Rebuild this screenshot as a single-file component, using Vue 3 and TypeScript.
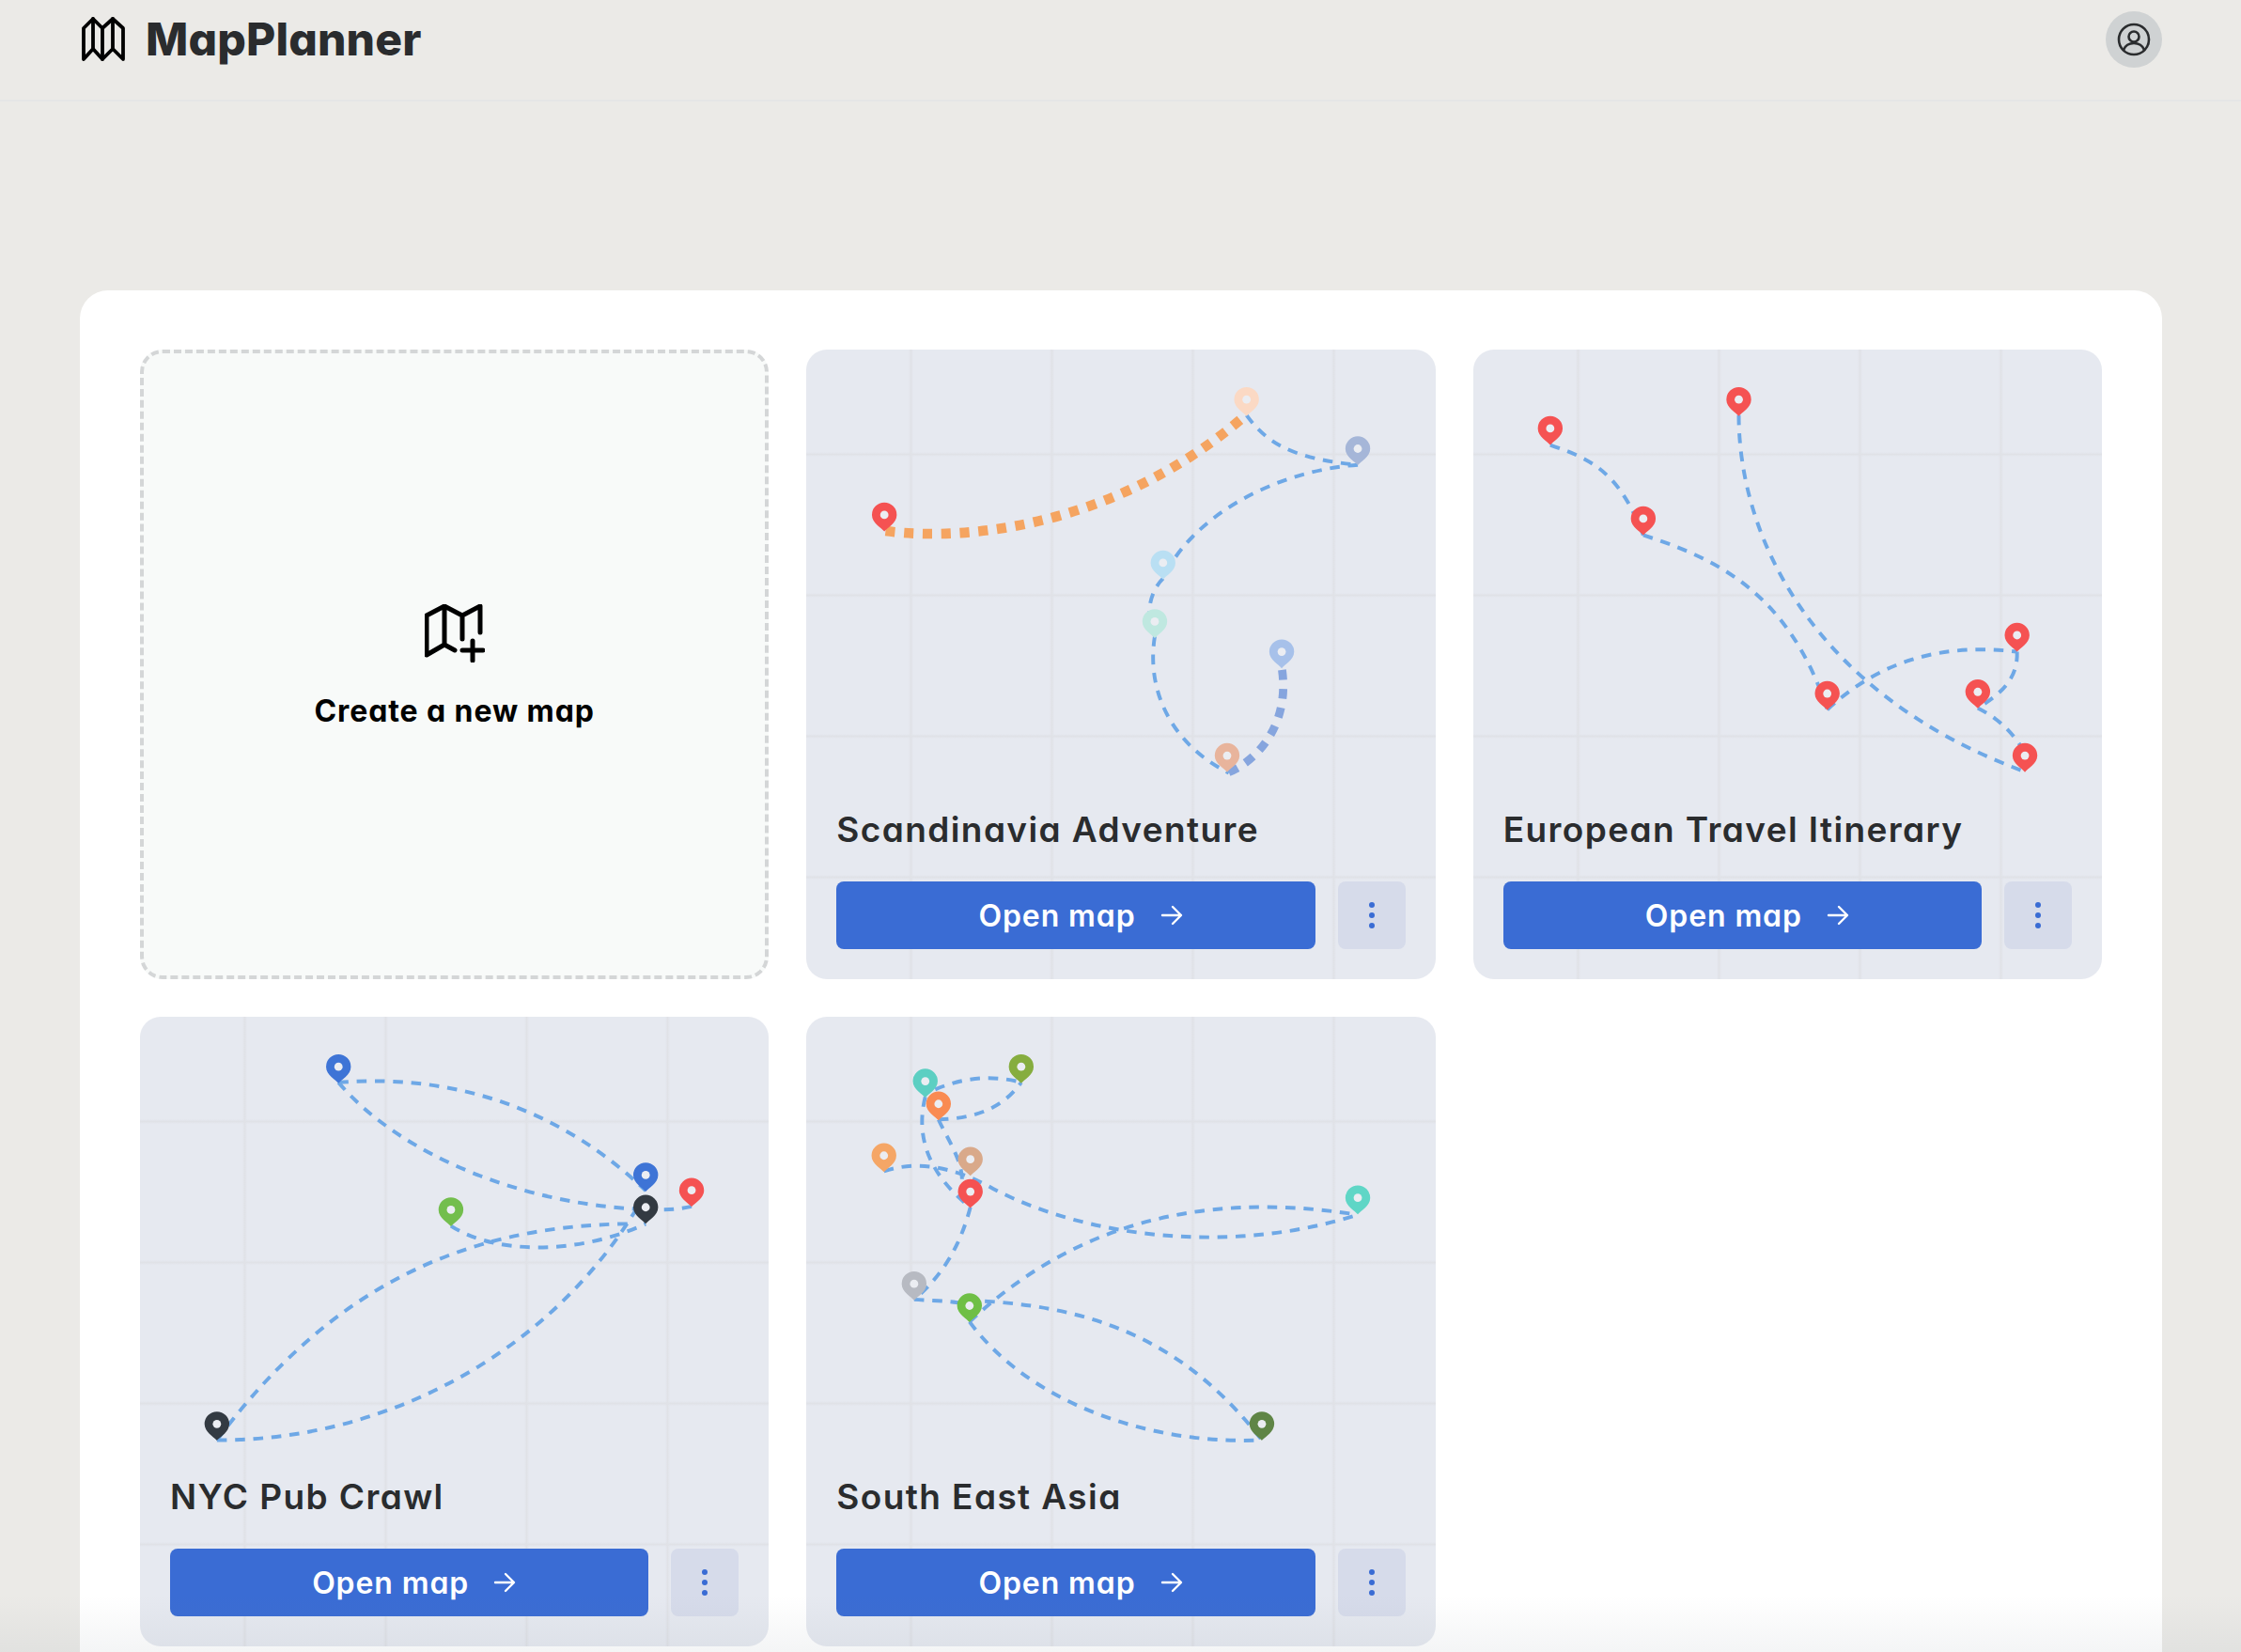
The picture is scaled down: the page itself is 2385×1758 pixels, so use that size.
<script setup lang="ts">
interface Pin { x: number; y: number; c: string }
interface Route { d: string; kind?: 'orange' | 'thick' }
interface MapCard { title: string; vb: string; routes: Route[]; pins: Pin[] }

const pinPath = 'M0 40C-6 32-30 20-30 0A30 30 0 0 1 30 0C30 20 6 32 0 40Z'

const maps: MapCard[] = [
  {
    title: 'Scandinavia Adventure',
    vb: '18 27 1521 1521',
    routes: [
      { d: 'M210 465C450 495 800 430 1083 183', kind: 'orange' },
      { d: 'M1083 185C1130 250 1190 290 1352 305' },
      { d: 'M1352 305C1150 320 950 430 881 580' },
      { d: 'M881 580C850 610 835 670 861 718' },
      { d: 'M861 720C840 850 900 980 1040 1050' },
      { d: 'M1040 1048C1110 1020 1190 930 1168 795', kind: 'thick' }
    ],
    pins: [
      { x: 207, y: 426, c: '#f55252' },
      { x: 1083, y: 147, c: '#fbd9c4' },
      { x: 1352, y: 266, c: '#a5b6d8' },
      { x: 881, y: 542, c: '#b9dff3' },
      { x: 861, y: 684, c: '#bfe8e0' },
      { x: 1168, y: 757, c: '#a7c1ea' },
      { x: 1036, y: 1008, c: '#e8b49c' }
    ]
  },
  {
    title: 'European Travel Itinerary',
    vb: '18 27 1521 1521',
    routes: [
      { d: 'M204 257C300 290 370 320 429 475' },
      { d: 'M429 475C600 530 780 610 874 897' },
      { d: 'M660 185C660 480 840 860 1352 1047' },
      { d: 'M874 897C1000 780 1150 735 1333 757' },
      { d: 'M1333 757C1335 810 1310 850 1238 893' },
      { d: 'M1238 893C1290 920 1320 950 1352 1000' }
    ],
    pins: [
      { x: 204, y: 217, c: '#f55252' },
      { x: 429, y: 435, c: '#f55252' },
      { x: 660, y: 147, c: '#f55252' },
      { x: 874, y: 858, c: '#f55252' },
      { x: 1238, y: 854, c: '#f55252' },
      { x: 1333, y: 717, c: '#f55252' },
      { x: 1352, y: 1008, c: '#f55252' }
    ]
  },
  {
    title: 'NYC Pub Crawl',
    vb: '20 25 1521 1521',
    routes: [
      { d: 'M500 183C800 160 1050 260 1243 445' },
      { d: 'M500 183C650 360 950 480 1243 490' },
      { d: 'M1243 490C1290 492 1320 490 1354 483' },
      { d: 'M772 530C880 600 1080 600 1243 525' },
      { d: 'M206 1048C480 680 800 530 1200 525' },
      { d: 'M206 1048C600 1050 1000 850 1220 490' }
    ],
    pins: [
      { x: 500, y: 145, c: '#3e74d6' },
      { x: 1243, y: 407, c: '#3e74d6' },
      { x: 1354, y: 444, c: '#f55252' },
      { x: 772, y: 491, c: '#73be4d' },
      { x: 1243, y: 485, c: '#333a42' },
      { x: 206, y: 1009, c: '#333a42' }
    ]
  },
  {
    title: 'South East Asia',
    vb: '18 25 1521 1521',
    routes: [
      { d: 'M330 200C400 170 470 165 538 183' },
      { d: 'M338 273C420 270 490 250 538 183' },
      { d: 'M338 273C360 320 395 370 395 420' },
      { d: 'M306 218C280 320 320 410 415 485' },
      { d: 'M206 398C300 365 400 400 470 440C700 560 1050 600 1352 503' },
      { d: 'M415 485C395 560 360 640 279 708' },
      { d: 'M279 708C340 712 400 710 450 735' },
      { d: 'M413 762C650 540 950 440 1352 503' },
      { d: 'M450 712C750 730 950 830 1120 1048' },
      { d: 'M413 762C560 960 850 1060 1120 1048' }
    ],
    pins: [
      { x: 538, y: 145, c: '#86ad3f' },
      { x: 306, y: 180, c: '#5ccfc2' },
      { x: 338, y: 235, c: '#f98b52' },
      { x: 206, y: 360, c: '#f5a666' },
      { x: 415, y: 369, c: '#d9a98a' },
      { x: 415, y: 447, c: '#f55252' },
      { x: 1352, y: 462, c: '#5fd6c6' },
      { x: 279, y: 670, c: '#b7bac2' },
      { x: 413, y: 723, c: '#6fbf46' },
      { x: 1120, y: 1009, c: '#5f8546' }
    ]
  }
]
</script>

<template>
  <div class="page">
    <header class="topbar">
      <div class="brand">
        <svg class="brand-icon" viewBox="0 0 46 50" fill="none" stroke="#000" stroke-width="3.8" stroke-linejoin="round" stroke-linecap="round">
          <path d="M2 46V13L12 3L22 13L33 3L44 13V46L33 35L22 46L12 35Z" />
          <path d="M12 3V35M22 13V46M33 3V35" />
        </svg>
        <span class="brand-name">MapPlanner</span>
      </div>
      <div class="avatar">
        <svg viewBox="0 0 36 36" fill="none" stroke="#2a2c2e" stroke-width="2.6" stroke-linecap="round">
          <circle cx="18" cy="18" r="16" />
          <circle cx="18" cy="15" r="5.5" />
          <path d="M7 29C9 24 13 22 18 22S27 24 29 29" />
        </svg>
      </div>
    </header>

    <main class="panel">
      <div class="grid">
        <button class="create" type="button">
          <svg class="create-icon" viewBox="0 0 64 62" fill="none" stroke="#000" stroke-width="5" stroke-linecap="round" stroke-linejoin="round">
            <path d="M2 54V12L21 2L40 12L59 2V30M21 2V42M40 12V37M2 54L21 43L32 49" />
            <path d="M51 39V60M40 49H62" />
          </svg>
          <span class="create-label">Create a new map</span>
        </button>

        <article v-for="m in maps" :key="m.title" class="card">
          <svg class="map" :viewBox="m.vb" fill="none">
            <path
              v-for="(r, i) in m.routes"
              :key="i"
              :d="r.d"
              class="route"
              :class="r.kind"
            />
            <g v-for="(p, i) in m.pins" :key="'p' + i" :transform="`translate(${p.x} ${p.y})`">
              <path :d="pinPath" :fill="p.c" />
              <circle r="10" fill="#ebedf2" />
            </g>
          </svg>
          <div class="card-body">
            <h2 class="card-title">{{ m.title }}</h2>
            <div class="actions">
              <button class="open" type="button">
                <span>Open map</span>
                <svg viewBox="0 0 24 22" fill="none" stroke="#fff" stroke-width="2.4" stroke-linecap="round" stroke-linejoin="round">
                  <path d="M2 11H22M13 2L22 11L13 20" />
                </svg>
              </button>
              <button class="more" type="button" aria-label="More">
                <i></i><i></i><i></i>
              </button>
            </div>
          </div>
        </article>
      </div>
    </main>

    <div class="fade"></div>
  </div>
</template>

<style scoped>
.page {
  position: relative;
  height: 1758px;
  overflow: hidden;
  background: #ebeae7;
  font-family: Inter, "Liberation Sans", sans-serif;
  font-feature-settings: "cv11" 1;
}
.topbar {
  height: 108px;
  box-sizing: border-box;
  border-bottom: 2px solid #e5e6e6;
  display: flex;
  align-items: flex-start;
  justify-content: space-between;
  padding: 12px 84px 0 87px;
}
.brand {
  display: flex;
  align-items: center;
  gap: 22px;
  height: 60px;
}
.brand-icon {
  width: 46px;
  height: 50px;
}
.brand-name {
  font-size: 48px;
  font-weight: 800;
  color: #2a2c2e;
  line-height: 60px;
  letter-spacing: 0.15px;
}
.avatar {
  width: 60px;
  height: 60px;
  border-radius: 50%;
  background: #cfd2d3;
  display: flex;
  align-items: center;
  justify-content: center;
}
.avatar svg {
  width: 36px;
  height: 36px;
}
.panel {
  margin: 201px 84px 0 85px;
  padding: 63px 64px 64px;
  background: #fff;
  border-radius: 30px;
}
.grid {
  display: grid;
  grid-template-columns: repeat(3, 1fr);
  gap: 40px;
}
.create {
  height: 670px;
  box-sizing: border-box;
  border: 4px dashed #d4d6d7;
  border-radius: 24px;
  background: #f8faf9;
  display: flex;
  flex-direction: column;
  align-items: center;
  justify-content: center;
  gap: 32px;
  padding: 6px 0 0;
  font-family: inherit;
  font-feature-settings: inherit;
}
.create-icon {
  width: 64px;
  height: 62px;
}
.create-label {
  font-size: 32px;
  font-weight: 700;
  line-height: 40px;
  color: #000;
  letter-spacing: 0.9px;
}
.card {
  position: relative;
  height: 670px;
  box-sizing: border-box;
  border-radius: 22px;
  overflow: hidden;
  background-color: #e6e9f0;
  background-image:
    linear-gradient(to right, transparent, #e0e2e7 2.5px, transparent 5px),
    linear-gradient(to bottom, transparent, #e0e2e7 2.5px, transparent 5px);
  background-size: 150px 150px;
  background-position: 109px 109px;
}
.map {
  position: absolute;
  inset: 0;
  width: 100%;
  height: 100%;
}
.route {
  stroke: #6ea8e6;
  stroke-width: 9;
  stroke-dasharray: 24 20;
}
.route.orange {
  stroke: #f5a460;
  stroke-width: 24;
  stroke-dasharray: 23 22;
}
.route.thick {
  stroke: #86a5de;
  stroke-width: 20;
  stroke-dasharray: 24 22;
}
.card-body {
  position: relative;
  height: 100%;
  box-sizing: border-box;
  padding: 0 32px 32px;
  display: flex;
  flex-direction: column;
  justify-content: flex-end;
}
.card-title {
  margin: 0 0 31px;
  font-size: 37px;
  font-weight: 600;
  line-height: 48px;
  color: #2a2c2e;
  white-space: nowrap;
  letter-spacing: 1.4px;
}
.actions {
  display: flex;
  gap: 24px;
}
.open {
  flex: 1;
  height: 72px;
  border: 0;
  border-radius: 8px;
  background: #3a6cd4;
  color: #fff;
  display: flex;
  align-items: center;
  justify-content: center;
  gap: 26px;
  padding: 0 0 0 10px;
  font-family: inherit;
  font-feature-settings: inherit;
  font-size: 32px;
  font-weight: 600;
  letter-spacing: 0.9px;
}
.open svg {
  width: 24px;
  height: 22px;
}
.more {
  width: 72px;
  height: 72px;
  border: 0;
  border-radius: 8px;
  background: #d6dbea;
  display: flex;
  flex-direction: column;
  align-items: center;
  justify-content: center;
  gap: 5px;
  padding: 0;
}
.more i {
  width: 6px;
  height: 6px;
  border-radius: 50%;
  background: #3a6cd4;
}
.fade {
  position: absolute;
  left: 0;
  right: 0;
  bottom: 0;
  height: 60px;
  pointer-events: none;
  background: linear-gradient(to bottom, rgba(110, 125, 135, 0), rgba(110, 125, 135, 0.08));
}
</style>
